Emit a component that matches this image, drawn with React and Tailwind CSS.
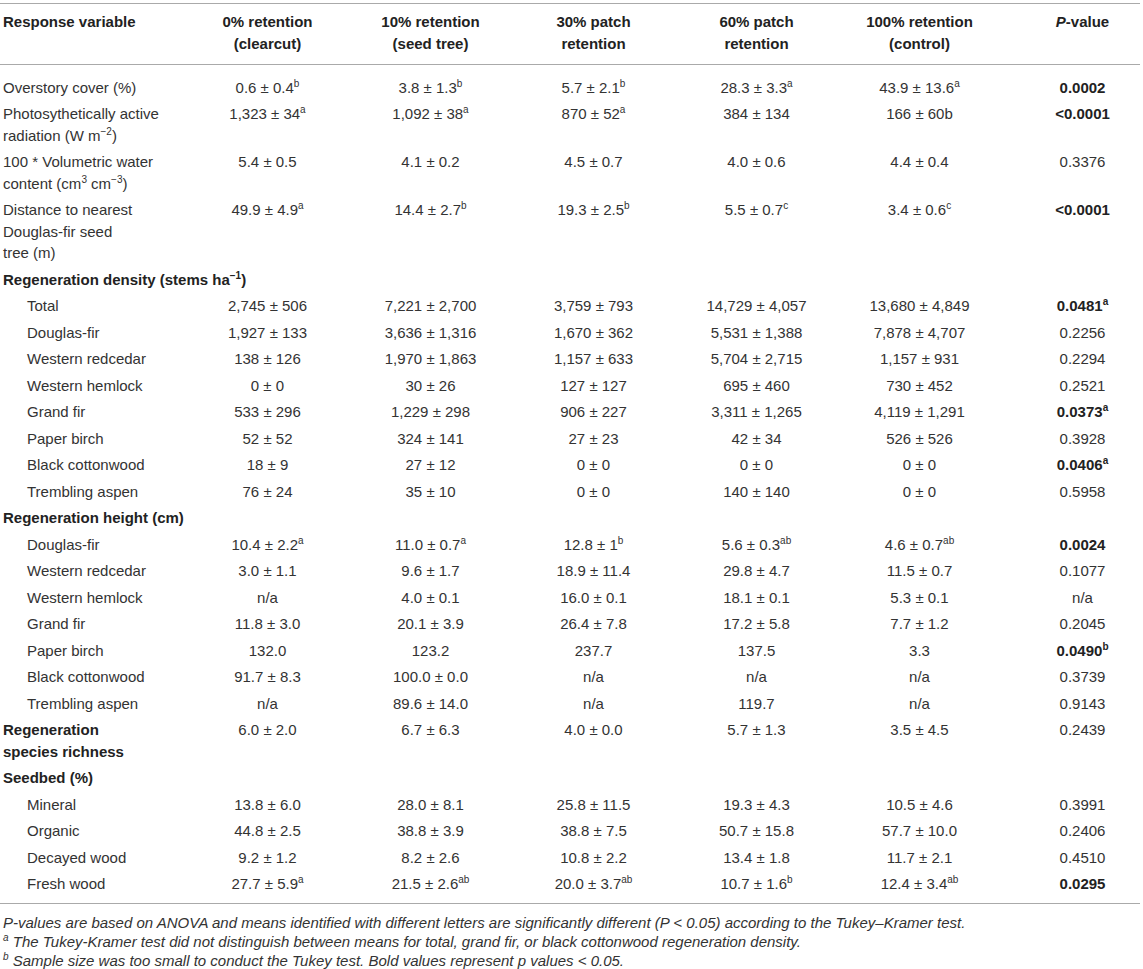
import React from 'react';

const grid = 'grid grid-cols-[186px_repeat(6,163px)]';

const S = ({ children }) => <sup className="text-[10px] leading-none -top-[6px]">{children}</sup>;

const v = (t, s) => ({ t, s });

const rows = [
    { label: <>Overstory cover (%)</>, vals: [v('0.6 ± 0.4', 'b'), v('3.8 ± 1.3', 'b'), v('5.7 ± 2.1', 'b'), v('28.3 ± 3.3', 'a'), v('43.9 ± 13.6', 'a')], p: '0.0002', bold: true },
    { label: <>Photosythetically active<br />radiation (W m<S>−2</S>)</>, vals: [v('1,323 ± 34', 'a'), v('1,092 ± 38', 'a'), v('870 ± 52', 'a'), v('384 ± 134'), v('166 ± 60b')], p: '<0.0001', bold: true },
    { label: <>100 * Volumetric water<br />content (cm<S>3</S> cm<S>−3</S>)</>, vals: [v('5.4 ± 0.5'), v('4.1 ± 0.2'), v('4.5 ± 0.7'), v('4.0 ± 0.6'), v('4.4 ± 0.4')], p: '0.3376' },
    { label: <>Distance to nearest<br />Douglas-fir seed<br />tree (m)</>, vals: [v('49.9 ± 4.9', 'a'), v('14.4 ± 2.7', 'b'), v('19.3 ± 2.5', 'b'), v('5.5 ± 0.7', 'c'), v('3.4 ± 0.6', 'c')], p: '<0.0001', bold: true },
    { section: <>Regeneration density (stems ha<S>−1</S>)</> },
    { sub: 'Total', vals: [v('2,745 ± 506'), v('7,221 ± 2,700'), v('3,759 ± 793'), v('14,729 ± 4,057'), v('13,680 ± 4,849')], p: '0.0481', bold: true, ps: 'a' },
    { sub: 'Douglas-fir', vals: [v('1,927 ± 133'), v('3,636 ± 1,316'), v('1,670 ± 362'), v('5,531 ± 1,388'), v('7,878 ± 4,707')], p: '0.2256' },
    { sub: 'Western redcedar', vals: [v('138 ± 126'), v('1,970 ± 1,863'), v('1,157 ± 633'), v('5,704 ± 2,715'), v('1,157 ± 931')], p: '0.2294' },
    { sub: 'Western hemlock', vals: [v('0 ± 0'), v('30 ± 26'), v('127 ± 127'), v('695 ± 460'), v('730 ± 452')], p: '0.2521' },
    { sub: 'Grand fir', vals: [v('533 ± 296'), v('1,229 ± 298'), v('906 ± 227'), v('3,311 ± 1,265'), v('4,119 ± 1,291')], p: '0.0373', bold: true, ps: 'a' },
    { sub: 'Paper birch', vals: [v('52 ± 52'), v('324 ± 141'), v('27 ± 23'), v('42 ± 34'), v('526 ± 526')], p: '0.3928' },
    { sub: 'Black cottonwood', vals: [v('18 ± 9'), v('27 ± 12'), v('0 ± 0'), v('0 ± 0'), v('0 ± 0')], p: '0.0406', bold: true, ps: 'a' },
    { sub: 'Trembling aspen', vals: [v('76 ± 24'), v('35 ± 10'), v('0 ± 0'), v('140 ± 140'), v('0 ± 0')], p: '0.5958' },
    { section: 'Regeneration height (cm)' },
    { sub: 'Douglas-fir', vals: [v('10.4 ± 2.2', 'a'), v('11.0 ± 0.7', 'a'), v('12.8 ± 1', 'b'), v('5.6 ± 0.3', 'ab'), v('4.6 ± 0.7', 'ab')], p: '0.0024', bold: true },
    { sub: 'Western redcedar', vals: [v('3.0 ± 1.1'), v('9.6 ± 1.7'), v('18.9 ± 11.4'), v('29.8 ± 4.7'), v('11.5 ± 0.7')], p: '0.1077' },
    { sub: 'Western hemlock', vals: [v('n/a'), v('4.0 ± 0.1'), v('16.0 ± 0.1'), v('18.1 ± 0.1'), v('5.3 ± 0.1')], p: 'n/a' },
    { sub: 'Grand fir', vals: [v('11.8 ± 3.0'), v('20.1 ± 3.9'), v('26.4 ± 7.8'), v('17.2 ± 5.8'), v('7.7 ± 1.2')], p: '0.2045' },
    { sub: 'Paper birch', vals: [v('132.0'), v('123.2'), v('237.7'), v('137.5'), v('3.3')], p: '0.0490', bold: true, ps: 'b' },
    { sub: 'Black cottonwood', vals: [v('91.7 ± 8.3'), v('100.0 ± 0.0'), v('n/a'), v('n/a'), v('n/a')], p: '0.3739' },
    { sub: 'Trembling aspen', vals: [v('n/a'), v('89.6 ± 14.0'), v('n/a'), v('119.7'), v('n/a')], p: '0.9143' },
    { label: <>Regeneration<br />species richness</>, strong: true, vals: [v('6.0 ± 2.0'), v('6.7 ± 6.3'), v('4.0 ± 0.0'), v('5.7 ± 1.3'), v('3.5 ± 4.5')], p: '0.2439' },
    { section: 'Seedbed (%)' },
    { sub: 'Mineral', vals: [v('13.8 ± 6.0'), v('28.0 ± 8.1'), v('25.8 ± 11.5'), v('19.3 ± 4.3'), v('10.5 ± 4.6')], p: '0.3991' },
    { sub: 'Organic', vals: [v('44.8 ± 2.5'), v('38.8 ± 3.9'), v('38.8 ± 7.5'), v('50.7 ± 15.8'), v('57.7 ± 10.0')], p: '0.2406' },
    { sub: 'Decayed wood', vals: [v('9.2 ± 1.2'), v('8.2 ± 2.6'), v('10.8 ± 2.2'), v('13.4 ± 1.8'), v('11.7 ± 2.1')], p: '0.4510' },
    { sub: 'Fresh wood', vals: [v('27.7 ± 5.9', 'a'), v('21.5 ± 2.6', 'ab'), v('20.0 ± 3.7', 'ab'), v('10.7 ± 1.6', 'b'), v('12.4 ± 3.4', 'ab')], p: '0.0295', bold: true },
];

const headers = [
    ['0% retention', '(clearcut)'],
    ['10% retention', '(seed tree)'],
    ['30% patch', 'retention'],
    ['60% patch', 'retention'],
    ['100% retention', '(control)'],
];

function Row({ row }) {
    if (row.section) {
        return (
            <div className={`${grid} py-[2.5px]`}>
                <div className="col-span-7 pl-[3px] font-bold text-[#222] whitespace-nowrap">{row.section}</div>
            </div>
        );
    }

    return (
        <div className={`${grid} py-[2.5px]`}>
            {row.sub ? (
                <div className="pl-[27px] whitespace-nowrap">{row.sub}</div>
            ) : (
                <div className={`pl-[3px] whitespace-nowrap ${row.strong ? 'font-bold text-[#222]' : ''}`}>{row.label}</div>
            )}
            {row.vals.map((c, i) => (
                <div key={i} className="text-center whitespace-nowrap">
                    {c.t}
                    {c.s && <S>{c.s}</S>}
                </div>
            ))}
            <div className={`text-center whitespace-nowrap ${row.bold ? 'font-bold text-[#222]' : ''}`}>
                {row.p}
                {row.ps && <S>{row.ps}</S>}
            </div>
        </div>
    );
}

export default function App() {
    return (
        <div className="w-[1143px] h-[969px] overflow-hidden bg-white pt-[3px] font-['Liberation_Sans',Arial,sans-serif] text-[15px] leading-[21.5px] text-[#333]">
            <div className="h-px w-[1140px] bg-[#aaa]"></div>

            <div className={`${grid} pt-[7px] pb-[10px] font-bold text-[#222]`}>
                <div className="pl-[3px]">Response variable</div>
                {headers.map(h => (
                    <div key={h[0]} className="text-center">
                        <div>{h[0]}</div>
                        <div>{h[1]}</div>
                    </div>
                ))}
                <div className="text-center"><i>P</i>-value</div>
            </div>

            <div className="h-px w-[1140px] bg-[#aaa]"></div>

            <div className="pt-[9px] pb-[6px]">
                {rows.map((row, i) => <Row key={i} row={row} />)}
            </div>

            <div className="h-px w-[1140px] bg-[#aaa]"></div>

            <div className="pt-[9px] pl-[3px] text-[15px] leading-[19px] italic">
                <p><i>P</i>-values are based on ANOVA and means identified with different letters are significantly different (<i>P</i> &lt; 0.05) according to the Tukey–Kramer test.</p>
                <p><S>a</S> The Tukey-Kramer test did not distinguish between means for total, grand fir, or black cottonwood regeneration density.</p>
                <p><S>b</S> Sample size was too small to conduct the Tukey test. Bold values represent p values &lt; 0.05.</p>
            </div>
        </div>
    );
}
